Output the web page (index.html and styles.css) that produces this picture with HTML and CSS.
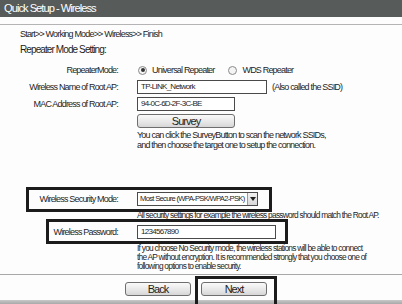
FILE: index.html
```html
<!DOCTYPE html>
<html>
<head>
<meta charset="utf-8">
<link rel="stylesheet" href="styles.css">
</head>
<body>
<div class="page">
  <div class="header">Quick Setup - Wireless</div>
  <div class="rule"></div>
  <div class="crumb">Start&gt;&gt; Working Mode&gt;&gt; Wireless&gt;&gt; Finish</div>
  <div class="title">Repeater Mode Setting:</div>

  <div class="row row-mode">
    <div class="lbl">RepeaterMode:</div>
    <div class="field">
      <span class="radio checked"></span><span class="opt">Universal Repeater</span>
      <span class="radio"></span><span class="opt">WDS Repeater</span>
    </div>
  </div>
  <div class="row row-name">
    <div class="lbl">Wireless Name of Root AP:</div>
    <div class="field">
      <div class="input w-name">TP-LINK_Network</div>
      <span class="hint">(Also called the SSID)</span>
    </div>
  </div>
  <div class="row row-mac">
    <div class="lbl">MAC Address of Root AP:</div>
    <div class="field"><div class="input w-mac">94-0C-6D-2F-3C-BE</div></div>
  </div>
  <div class="row row-survey">
    <div class="lbl"></div>
    <div class="field"><div class="btn survey">Survey</div></div>
  </div>
  <div class="note note-survey">You can click the SurveyButton to scan the network SSIDs,<br>and then choose the target one to setup the connection.</div>

  <div class="row row-sec">
    <div class="lbl">Wireless Security Mode:</div>
    <div class="field">
      <div class="select"><span class="sel-text">Most Secure (WPA-PSK/WPA2-PSK)</span><span class="sel-arrow"></span></div>
    </div>
  </div>
  <div class="small note-sec">All security settings for example the wireless password should match the Root AP.</div>
  <div class="row row-pass">
    <div class="lbl">Wireless Password:</div>
    <div class="field"><div class="input w-pass">1234567890</div></div>
  </div>
  <div class="small note-pass">If you choose No Security mode, the wireless stations will be able to connect<br>the AP without encryption. It is recommended strongly that you choose one of<br>following options to enable security.</div>

  <div class="sep"></div>
  <div class="buttons">
    <div class="btn nav">Back</div>
    <div class="btn nav">Next</div>
  </div>
  <div class="footbar"></div>

  <div class="callout c-sec"></div>
  <div class="callout c-pass"></div>
  <div class="callout c-next"></div>
</div>
</body>
</html>
```
FILE: styles.css
```css
* { box-sizing: border-box; letter-spacing: -0.09em; }
html, body { margin: 0; padding: 0; background: #fdfdfd; }
body {
  font-family: "Liberation Sans", Arial, sans-serif;
  color: #1e1e1e;
  width: 402px;
  height: 304px;
  overflow: hidden;
}
.page { position: relative; width: 402px; height: 304px; }

.header {
  height: 17px;
  line-height: 16px;
  background: #575c5a;
  color: #ffffff;
  font-size: 11.2px;
  padding-left: 4px;
}
.rule { margin-top: 7px; height: 1px; background: #b4b4b4; }
.crumb {
  margin-top: 4px;
  padding-left: 20px;
  font-size: 9px;
  line-height: 10px;
}
.title {
  margin-top: 4px;
  padding-left: 20px;
  font-size: 10px;
  line-height: 14px;
}

.row { display: flex; align-items: center; height: 14px; }
.lbl {
  width: 118px;
  margin-right: 19px;
  text-align: right;
  font-size: 9px;
  white-space: nowrap;
}
.field { display: flex; align-items: center; font-size: 9px; }

.row-mode { margin-top: 6px; }
.row-name { margin-top: 3px; }
.row-mac { margin-top: 3px; }
.row-survey { margin-top: 3px; }

.radio {
  width: 9px; height: 9px;
  border-radius: 50%;
  border: 1px solid #8a8a8a;
  background: #f4f4f4;
  margin-left: 1px;
  margin-right: 5px;
  position: relative;
}
.radio.checked::after {
  content: "";
  position: absolute;
  left: 1.5px; top: 1.5px;
  width: 4px; height: 4px;
  border-radius: 50%;
  background: #333;
}
.opt { margin-right: 13px; }

.input {
  height: 14px;
  border: 1px solid #4a4a4a;
  background: #ffffff;
  font-size: 8px;
  line-height: 12px;
  padding-left: 3px;
  white-space: nowrap;
  overflow: hidden;
}
.w-name { width: 130px; }
.w-mac { width: 98px; }
.w-pass { width: 139px; }
.hint { margin-left: 5px; }

.btn {
  border: 1px solid #6e6e6e;
  border-radius: 3px;
  background: linear-gradient(#fafafa, #e6e6e6 60%, #d6d6d6);
  text-align: center;
  font-size: 11px;
  line-height: 12px;
  height: 14px;
}
.survey { width: 98px; }

.note {
  margin-top: 2px;
  padding-left: 137px;
  font-size: 9px;
  line-height: 10px;
}

.row-sec { margin-top: 42px; }
.select {
  width: 121px;
  height: 14px;
  border: 1px solid #4a4a4a;
  background: #fff;
  display: flex;
  align-items: stretch;
}
.sel-text {
  flex: 1;
  min-width: 0;
  font-size: 7.6px;
  line-height: 12px;
  padding-left: 2px;
  white-space: nowrap;
  overflow: hidden;
}
.sel-arrow {
  flex: none;
  width: 10px;
  border-left: 1px solid #9a9a9a;
  background: linear-gradient(#f2f2f2, #d8d8d8);
  position: relative;
}
.sel-arrow::after {
  content: "";
  position: absolute;
  left: 2px; top: 4px;
  border-left: 3px solid transparent;
  border-right: 3px solid transparent;
  border-top: 4px solid #222;
}

.small {
  padding-left: 137px;
  font-size: 8.4px;
  line-height: 9px;
  white-space: nowrap;
}
.note-sec { margin-top: 5px; }
.row-pass { margin-top: 5px; }
.note-pass { margin-top: 5px; }

.sep { margin-top: 3px; height: 1px; background: #a8a8a8; }
.buttons {
  margin-top: 7px;
  display: flex;
  padding-left: 125px;
  gap: 10px;
}
.nav { width: 66px; }
.footbar {
  margin-top: 4px;
  height: 4px;
  background: linear-gradient(#c8c8c8, #a9a9a9);
}

.callout {
  position: absolute;
  border: 3px solid #1c1c1c;
}
.c-sec { left: 26px; top: 187px; width: 246px; height: 25px; }
.c-pass { left: 46px; top: 219px; width: 242px; height: 25px; }
.c-next { left: 195px; top: 276px; width: 82px; height: 32px; }
```
